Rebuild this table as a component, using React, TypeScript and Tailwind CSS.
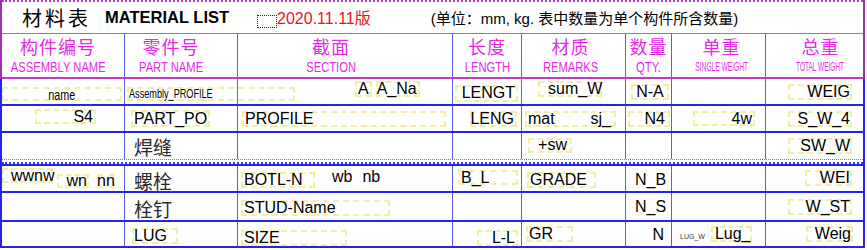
import React from "react";

const COLS = "grid grid-cols-[123px_113px_215px_69px_104px_46px_94px_97px]";
const ZH = "font-['Noto_Sans_CJK_SC',sans-serif]";
const ROW = "border-b-2 border-[#2424ec]";

type Kids = { className?: string; children?: React.ReactNode };

const Cell = ({ className = "", children, last = false }: Kids & { last?: boolean }) => (
  <div className={`flex ${last ? "" : "border-r border-[#5d5de6]"} ${className}`}>{children}</div>
);

const Box = ({ className = "", children }: Kids) => (
  <span
    className={`inline-flex shrink-0 items-center whitespace-nowrap border-2 border-dashed border-[#f2eea4] leading-none ${className}`}
  >
    {children}
  </span>
);

type HeadProps = { zh: string; en: string; className?: string; enClass?: string; last?: boolean };

const Head = ({ zh, en, className = "", enClass = "text-[14px] scale-x-[0.8]", last = false }: HeadProps) => (
  <Cell last={last} className={`flex-col items-center text-[#e52be5] ${className}`}>
    <span className={`${ZH} mt-[3px] text-[18px] leading-[19px] tracking-[1px]`}>{zh}</span>
    <span className={`mt-[3px] inline-block whitespace-nowrap leading-[16px] ${enClass}`}>{en}</span>
  </Cell>
);

const Zh = ({ children }: Kids) => (
  <span className={`${ZH} text-[19px] leading-none text-[#2a2a2a]`}>{children}</span>
);

export default function App() {
  return (
    <div className="h-[250px] w-[867px] overflow-hidden bg-white font-['Liberation_Sans','Noto_Sans_CJK_SC',sans-serif] text-[16px] text-black">
      <div className="w-[865px] border-x-2 border-[#a62bb6]">
        {/* title */}
        <div className="flex h-[33px] items-center border-t-2 border-dotted border-[#b43ac4] pl-[20px]">
          <span className={`${ZH} text-[20px] leading-none tracking-[3px]`}>材料表</span>
          <span className="ml-[14px] text-[16.5px] font-bold leading-none">MATERIAL LIST</span>
          <span className="ml-[28px] mt-[7px] h-[13px] w-[20px] border border-dotted border-[#222]" />
          <span className="mt-[2px] text-[16px] leading-none text-[#e8141c]">2020.11.11版</span>
          <span className="ml-[60px] mt-[1px] text-[15px] leading-none">(单位：mm, kg. 表中数量为单个构件所含数量)</span>
        </div>

        {/* header */}
        <div className={`${COLS} h-[46px] border-t border-b-2 border-t-[#7b7be8] border-b-[#c43ac4]`}>
          <Head zh="构件编号" en="ASSEMBLY NAME" className="pr-[10px]" />
          <Head zh="零件号" en="PART NAME" className="pr-[20px]" />
          <Head zh="截面" en="SECTION" className="pr-[28px]" />
          <Head zh="长度" en="LENGTH" />
          <Head zh="材质" en="REMARKS" className="pr-[6px]" />
          <Head zh="数量" en="QTY." />
          <Head zh="单重" en="SINGLE WEIGHT" className="pl-[6px]" enClass="text-[12.5px] scale-x-[0.53]" />
          <Head zh="总重" en="TOTAL WEIGHT" className="pl-[12px]" enClass="text-[12.5px] scale-x-[0.52]" last />
        </div>
      </div>

      <div className="w-[865px] border-x-2 border-[#2424ec]">
        {/* row 1 */}
        <div className={`${COLS} h-[27px] ${ROW}`}>
          <Cell className="items-center pt-[5px]">
            <Box className="h-[14px] w-[120px] justify-center">
              <span className="inline-block scale-x-[0.72] text-[15px]">name</span>
            </Box>
          </Cell>
          <Cell className="items-center pl-[2px] pt-[5px]">
            <Box className="h-[14px] w-[168px]">
              <span className="inline-block origin-left scale-x-[0.73] text-[12.5px]">Assembly_PROFILE</span>
            </Box>
          </Cell>
          <Cell className="items-center pb-[5px] pl-[117px]">
            <Box className="h-[16px] px-[1px]">A</Box>
            <Box className="ml-[4px] h-[16px] w-[44px] justify-end pr-[1px]">A_Na</Box>
          </Cell>
          <Cell className="items-center pl-[2px] pt-[3px]">
            <Box className="h-[17px] w-[63px] justify-end pr-[1px]">LENGT</Box>
          </Cell>
          <Cell className="items-center pb-[5px] pl-[16px]">
            <Box className="h-[16px] w-[64px] pl-[8px]">sum_W</Box>
          </Cell>
          <Cell className="items-center pl-[5px]">
            <Box className="h-[16px] w-[38px] justify-center">N-A</Box>
          </Cell>
          <Cell className="items-center" />
          <Cell last className="items-center pl-[22px]">
            <Box className="h-[16px] w-[64px] justify-end">WEIG</Box>
          </Cell>
        </div>

        {/* row 2 */}
        <div className={`${COLS} h-[27px] ${ROW}`}>
          <Cell className="items-center pb-[4px] pl-[33px]">
            <Box className="h-[15px] w-[61px] justify-end pr-[1px]">S4</Box>
          </Cell>
          <Cell className="items-center pl-[6px]">
            <Box className="h-[17px] px-[1px]">PART_PO</Box>
          </Cell>
          <Cell className="items-center pl-[4px]">
            <Box className="h-[16px] w-[204px] pl-[1px]">PROFILE</Box>
          </Cell>
          <Cell className="items-center pl-[17px]">
            <Box className="h-[16px] w-[47px] justify-end pr-[1px]">LENG</Box>
          </Cell>
          <Cell className="items-center pl-[3px]">
            <Box className="h-[16px] w-[91px] justify-between pl-[1px] pr-[3px]">
              <span>mat</span>
              <span>sj_</span>
            </Box>
          </Cell>
          <Cell className="items-center pl-[2px]">
            <Box className="h-[16px] w-[42px] justify-end pr-[3px]">N4</Box>
          </Cell>
          <Cell className="items-center pl-[21px]">
            <Box className="h-[15px] w-[62px] justify-end pr-[1px]">4w</Box>
          </Cell>
          <Cell last className="items-center pl-[22px]">
            <Box className="h-[16px] w-[64px] justify-end">S_W_4</Box>
          </Cell>
        </div>

        {/* row 3 */}
        <div className={`${COLS} h-[26px]`}>
          <Cell />
          <Cell className="items-center pl-[9px]">
            <Zh>焊缝</Zh>
          </Cell>
          <Cell />
          <Cell />
          <Cell className="items-center pb-[2px] pl-[6px]">
            <Box className="h-[15px] w-[44px] justify-end pr-[3px]">+sw</Box>
          </Cell>
          <Cell />
          <Cell />
          <Cell last className="items-center pl-[22px]">
            <Box className="h-[16px] w-[64px] justify-end">SW_W</Box>
          </Cell>
        </div>

        {/* double separator */}
        <div className="flex h-[7px] flex-col">
          <div className="border-t border-dotted border-[#7070f0]" />
          <div className="mt-[2px] border-t-2 border-dotted border-[#3c3cec]" />
          <div className="mt-auto border-t-2 border-[#2424ec]" />
        </div>

        {/* row 4 */}
        <div className={`${COLS} h-[27px] ${ROW}`}>
          <Cell className="items-start pt-[2px]">
            <Box className="h-[15px] w-[51px] pl-[7px]">wwnw</Box>
            <Box className="ml-[4px] mt-[6px] h-[14px] w-[32px] justify-end">wn</Box>
            <Box className="ml-[8px] mt-[6px] h-[14px] w-[18px] justify-center">nn</Box>
          </Cell>
          <Cell className="items-center pl-[9px] pt-[3px]">
            <Zh>螺栓</Zh>
          </Cell>
          <Cell className="items-center pl-[3px] pt-[2px]">
            <Box className="h-[16px] w-[74px] pl-[1px]">BOTL-N</Box>
            <span className="mb-[5px] ml-[17px] leading-none">wb</span>
            <span className="mb-[5px] ml-[10px] leading-none">nb</span>
          </Cell>
          <Cell className="items-center pb-[2px] pl-[5px]">
            <Box className="h-[15px] w-[60px] pl-[1px]">B_L</Box>
          </Cell>
          <Cell className="items-center pl-[5px] pt-[3px]">
            <Box className="h-[16px] w-[69px] pl-[1px]">GRADE</Box>
          </Cell>
          <Cell className="items-center pl-[9px] pt-[3px]">
            <span className="leading-none">N_B</span>
          </Cell>
          <Cell />
          <Cell last className="items-center pb-[2px] pl-[39px]">
            <Box className="h-[16px] w-[47px] justify-end">WEI</Box>
          </Cell>
        </div>

        {/* row 5 */}
        <div className={`${COLS} h-[29px] ${ROW}`}>
          <Cell />
          <Cell className="items-center pl-[9px] pt-[3px]">
            <Zh>栓钉</Zh>
          </Cell>
          <Cell className="items-center pl-[3px] pt-[2px]">
            <Box className="h-[16px] w-[149px] pl-[1px]">STUD-Name</Box>
          </Cell>
          <Cell />
          <Cell />
          <Cell className="items-center pl-[9px]">
            <span className="leading-none">N_S</span>
          </Cell>
          <Cell />
          <Cell last className="items-center pl-[22px]">
            <Box className="h-[16px] w-[64px] justify-end">W_ST</Box>
          </Cell>
        </div>

        {/* row 6 */}
        <div className={`${COLS} h-[26px] ${ROW}`}>
          <Cell />
          <Cell className="items-center pl-[7px] pt-[4px]">
            <Box className="h-[16px] w-[46px]">LUG</Box>
          </Cell>
          <Cell className="items-center pl-[3px] pt-[7px]">
            <Box className="h-[16px] w-[106px] pl-[1px]">SIZE</Box>
          </Cell>
          <Cell className="items-center pl-[24px] pt-[8px]">
            <Box className="h-[16px] w-[41px] justify-end pr-[1px]">L-L</Box>
          </Cell>
          <Cell className="items-center pl-[4px]">
            <Box className="h-[16px] w-[47px] pl-[1px]">GR</Box>
          </Cell>
          <Cell className="items-center justify-end pr-[7px] pt-[2px]">
            <span className="leading-none">N</span>
          </Cell>
          <Cell className="items-center pl-[8px]">
            <span className="mt-[4px] text-[7px] leading-none text-[#333]">LUG_W</span>
            <Box className="ml-[6px] h-[16px] w-[41px] pl-[2px]">Lug_</Box>
          </Cell>
          <Cell last className="items-center pl-[40px]">
            <Box className="h-[16px] w-[47px] justify-end">Weig</Box>
          </Cell>
        </div>
      </div>
    </div>
  );
}
